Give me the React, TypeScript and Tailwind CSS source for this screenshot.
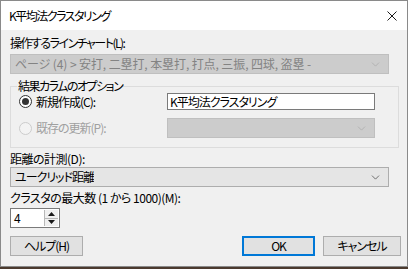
import { ChevronDown } from "lucide-react";

const font = { fontFamily: '"Noto Sans CJK JP", "Noto Sans", sans-serif' };

function Radio({ checked, disabled }: { checked?: boolean; disabled?: boolean }) {
  return (
    <span
      className={`grid size-[13px] place-items-center rounded-full border ${
        disabled ? "border-[#cccccc] bg-[#f3f3f3]" : "border-[#333333] bg-white"
      }`}
    >
      {checked ? <span className="size-[7px] rounded-full bg-[#333333]" /> : null}
    </span>
  );
}

function Combo({ text, disabled, className }: { text?: string; disabled?: boolean; className: string }) {
  return (
    <div
      className={`flex h-[20px] items-center justify-between border pl-[4px] pr-[6px] ${
        disabled ? "border-[#bfbfbf] bg-[#cccccc] text-[#838383]" : "border-[#adadad] bg-[#e5e5e5] text-black"
      } ${className}`}
    >
      <span className="truncate">{text}</span>
      <ChevronDown className={`size-[13px] ${disabled ? "text-[#a8a8a8]" : "text-[#404040]"}`} strokeWidth={1.3} />
    </div>
  );
}

export default function App() {
  return (
    <div className="h-[269px] w-[408px] bg-[#4b3a2e]" style={font}>
      <div className="flex h-[267px] w-[408px] flex-col border border-[#8a8a8a] bg-[#f0f0f0] text-[12px] leading-[16px] tracking-[-1px] text-black [font-feature-settings:'palt']">
        <div className="flex h-[29px] shrink-0 items-center justify-between bg-white pl-[8px] pr-[10px]">
          <span className="tracking-[-1.5px]">K平均法クラスタリング</span>
          <svg width="10" height="10" viewBox="0 0 10 10">
            <path d="M0.5 0.5 L9.5 9.5 M9.5 0.5 L0.5 9.5" stroke="#1a1a1a" strokeWidth="1" />
          </svg>
        </div>

        <div className="flex flex-1 flex-col pl-[9px] pr-[6px]">
          <div className="mt-[5px] tracking-[-1.5px]">操作するラインチャート(L):</div>
          <Combo
            disabled
            className="mt-[3px] w-[379px] tracking-[-0.1px]"
            text="ページ (4) > 安打, 二塁打, 本塁打, 打点, 三振, 四球, 盗塁 -"
          />

          <fieldset className="mt-[5px] w-[389px] border border-[#dcdcdc] pb-[9px] pl-[8px]">
            <legend className="ml-[-2px] px-[1px] leading-[14px] tracking-[-1.5px]">結果カラムのオプション</legend>
            <div className="flex h-[17px] items-center">
              <Radio checked />
              <span className="ml-[4px] w-[131px]">新規作成(C):</span>
              <div className="flex h-[17px] w-[208px] items-center border border-[#7a7a7a] bg-white pl-[2px]">
                K平均法クラスタリング
              </div>
            </div>
            <div className="mt-[8px] flex h-[20px] items-center">
              <Radio disabled />
              <span className="ml-[4px] w-[131px] text-[#a0a0a0]">既存の更新(P):</span>
              <Combo disabled className="w-[208px]" />
            </div>
          </fieldset>

          <div className="mt-[3px] tracking-[-0.5px]">距離の計測(D):</div>
          <Combo className="w-[379px]" text="ユークリッド距離" />

          <div className="mt-[3px] tracking-[-0.5px]">クラスタの最大数 (1 から 1000)(M):</div>
          <div className="mt-[2px] flex h-[20px] w-[50px] border border-[#7a7a7a] bg-white">
            <span className="flex-1 pl-[3px] leading-[18px]">4</span>
            <div className="my-[1px] mr-[1px] flex w-[14px] flex-col border-l border-[#b8b8b8] bg-[#f0f0f0]">
              <div className="flex flex-1 items-center justify-center border-b border-[#b8b8b8]">
                <svg width="7" height="4" viewBox="0 0 7 4"><path d="M3.5 0 L7 4 L0 4 Z" fill="#1a1a1a" /></svg>
              </div>
              <div className="flex flex-1 items-center justify-center">
                <svg width="7" height="4" viewBox="0 0 7 4"><path d="M0 0 L7 0 L3.5 4 Z" fill="#1a1a1a" /></svg>
              </div>
            </div>
          </div>

          <div className="mt-[8px] flex items-center justify-between">
            <button className="h-[20px] w-[73px] border border-[#adadad] bg-[#e1e1e1]">ヘルプ(H)</button>
            <div className="flex gap-[8px]">
              <button className="h-[20px] w-[73px] border-2 border-[#0078d7] bg-[#e1e1e1]">OK</button>
              <button className="h-[20px] w-[78px] border border-[#adadad] bg-[#e1e1e1]">キャンセル</button>
            </div>
          </div>
        </div>
      </div>
    </div>
  );
}
